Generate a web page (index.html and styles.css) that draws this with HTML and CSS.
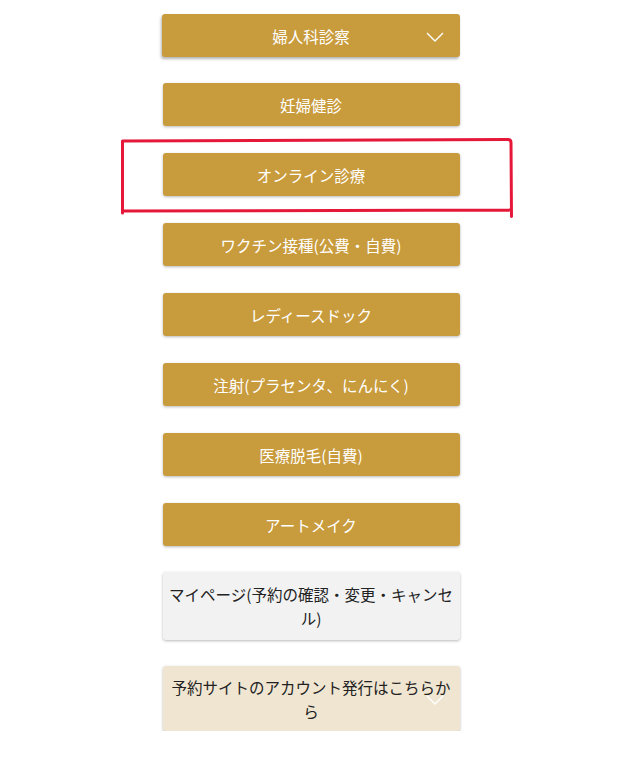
FILE: index.html
```html
<!DOCTYPE html>
<html lang="ja">
<head>
<meta charset="utf-8">
<title>メニュー</title>
<link rel="stylesheet" href="styles.css">
</head>
<body>
<nav class="menu">
  <a class="btn btn-gold btn-first">婦人科診察<svg class="chev" viewBox="0 0 18 10" width="18" height="10"><polyline points="1,1 9,9 17,1" fill="none" stroke="#fff" stroke-width="1.4"/></svg></a>
  <a class="btn btn-gold">妊婦健診</a>
  <a class="btn btn-gold">オンライン診療</a>
  <a class="btn btn-gold">ワクチン接種(公費・自費)</a>
  <a class="btn btn-gold">レディースドック</a>
  <a class="btn btn-gold">注射(プラセンタ、にんにく)</a>
  <a class="btn btn-gold">医療脱毛(自費)</a>
  <a class="btn btn-gold">アートメイク</a>
  <a class="btn btn-grey">マイページ(予約の確認・変更・キャンセル)</a>
  <a class="btn btn-beige">予約サイトのアカウント発行はこちらから<svg class="chev" viewBox="0 0 18 10" width="18" height="10"><polyline points="1,1 9,9 17,1" fill="none" stroke="#fff" stroke-width="1.4"/></svg></a>
</nav>
<svg class="mark" width="626" height="764" viewBox="0 0 626 764">
  <path d="M122.5 213 L122.5 141 L508 139.5 Q511 139.5 511 142.5 L511.5 216.5 M122.5 211 L511 210" fill="none" stroke="#e6183a" stroke-width="3" stroke-linecap="round" stroke-linejoin="round"/>
</svg>
</body>
</html>
```
FILE: styles.css
```css
html, body {
  margin: 0;
  padding: 0;
  background: #fff;
}
body {
  position: relative;
  font-family: "Noto Sans CJK JP", "Noto Sans", sans-serif;
}
.menu {
  display: flex;
  flex-direction: column;
  align-items: center;
  gap: 27px;
  padding-top: 14px;
  padding-right: 4px;
}
.btn {
  position: relative;
  box-sizing: border-box;
  width: 297px;
  padding: 9.5px 4px;
  font-size: 15.5px;
  line-height: 24px;
  text-align: center;
  border-radius: 3px;
  text-decoration: none;
  box-shadow: 0 1px 3px rgba(0, 0, 0, 0.28);
}
.btn-gold {
  background: #c89b3c;
  color: #fff;
}
.btn-first {
  width: 298px;
  margin-bottom: -1px;
  box-shadow: -1px 2px 3px rgba(0, 0, 0, 0.3);
}
.btn-grey {
  background: #f2f2f2;
  color: #222;
  margin-top: -1px;
  padding-top: 10px;
  padding-bottom: 10px;
  margin-bottom: -1px;
}
.btn-beige {
  background: #efe5d1;
  color: #222;
  padding-top: 8.5px;
  padding-bottom: 8.5px;
}
.chev {
  position: absolute;
  right: 16px;
  top: 50%;
  margin-top: -4px;
}
.mark {
  position: absolute;
  left: 0;
  top: 0;
  pointer-events: none;
}
```
